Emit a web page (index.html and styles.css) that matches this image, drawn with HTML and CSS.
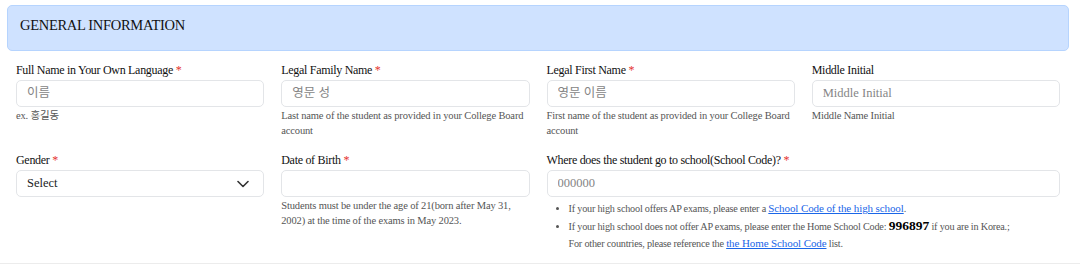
FILE: index.html
```html
<!DOCTYPE html>
<html>

<head>
    <meta charset="UTF-8">
    <meta name="viewport" content="width=device-width, initial-scale=1.0">
    <title>General Information</title>
    <link rel="stylesheet" href="styles.css">
</head>

<body>
    <div class="section">
        <div class="section-head">GENERAL INFORMATION</div>

        <div class="form-grid">
            <!-- Row 1 -->
            <div class="field">
                <label class="label">Full Name in Your Own Language <span class="req">*</span></label>
                <input type="text" class="input" placeholder="이름">
                <div class="help">ex. 홍길동</div>
            </div>
            <div class="field">
                <label class="label">Legal Family Name <span class="req">*</span></label>
                <input type="text" class="input" placeholder="영문 성">
                <div class="help">Last name of the student as provided in your College Board account</div>
            </div>
            <div class="field">
                <label class="label">Legal First Name <span class="req">*</span></label>
                <input type="text" class="input" placeholder="영문 이름">
                <div class="help">First name of the student as provided in your College Board account</div>
            </div>
            <div class="field">
                <label class="label">Middle Initial</label>
                <input type="text" class="input" placeholder="Middle Initial">
                <div class="help">Middle Name Initial</div>
            </div>

            <!-- Row 2 -->
            <div class="field">
                <label class="label">Gender <span class="req">*</span></label>
                <div class="select">
                    <span>Select</span>
                    <svg width="12" height="8" viewBox="0 0 12 8"><path d="M1 1.5l5 5 5-5" fill="none" stroke="#333" stroke-width="1.6" stroke-linecap="round" stroke-linejoin="round"/></svg>
                </div>
            </div>
            <div class="field">
                <label class="label">Date of Birth <span class="req">*</span></label>
                <input type="text" class="input">
                <div class="help">Students must be under the age of 21(born after May 31, 2002) at the time of the exams in May 2023.</div>
            </div>
            <div class="field wide">
                <label class="label">Where does the student go to school(School Code)? <span class="req">*</span></label>
                <input type="text" class="input" placeholder="000000">
                <ul class="notes">
                    <li>If your high school offers AP exams, please enter a <a href="#">School Code of the high school</a>.</li>
                    <li>If your high school does not offer AP exams, please enter the Home School Code: <b>996897</b> if you are in Korea.;<br>For other countries, please reference the <a href="#">the Home School Code</a> list.</li>
                </ul>
            </div>
        </div>
    </div>
</body>

</html>
```

FILE: styles.css
```css
body {
    margin: 0;
    font-family: 'Liberation Serif', 'Noto Sans CJK KR', serif;
    color: #111;
    background: #fff;
}

.section {
    padding: 5px 11px 0 7px;
    border-bottom: 1px solid #ececec;
    height: 258px;
}

.section-head {
    height: 44px;
    background-color: #cfe2ff;
    border: 1px solid #b6d4fe;
    border-radius: 5px;
    padding-left: 12px;
    line-height: 38px;
    font-size: 14.5px;
    letter-spacing: -0.3px;
}

.form-grid {
    display: grid;
    grid-template-columns: repeat(4, 1fr);
    column-gap: 17px;
    row-gap: 14px;
    padding: 11px 9px 0 9px;
}

.field {
    display: flex;
    flex-direction: column;
}

.field.wide {
    grid-column: span 2;
}

.label {
    font-size: 12px;
    letter-spacing: -0.3px;
    line-height: 16px;
    margin-bottom: 2px;
}

.req {
    color: #e5322d;
}

.input,
.select {
    box-sizing: border-box;
    height: 27px;
    width: 100%;
    border: 1px solid #e3e5e8;
    border-radius: 5px;
    padding: 0 10px;
    font-family: 'Liberation Serif', 'Noto Sans CJK KR', serif;
    font-size: 12.5px;
    color: #333;
    background: #fff;
}

.input::placeholder {
    color: #858585;
}

.select {
    display: flex;
    align-items: center;
    justify-content: space-between;
    padding-right: 14px;
    color: #222;
}

.help {
    font-size: 10.5px;
    letter-spacing: -0.15px;
    line-height: 15px;
    color: #555;
    margin-top: 1px;
}

.notes {
    margin: 3px 0 0;
    padding-left: 22px;
    font-size: 10.2px;
    letter-spacing: -0.2px;
    line-height: 16.5px;
    color: #555;
}

.notes b {
    color: #000;
    font-size: 13.5px;
    letter-spacing: 0;
}

.notes a {
    color: #1a66e8;
    font-size: 11px;
    letter-spacing: -0.1px;
}
```
